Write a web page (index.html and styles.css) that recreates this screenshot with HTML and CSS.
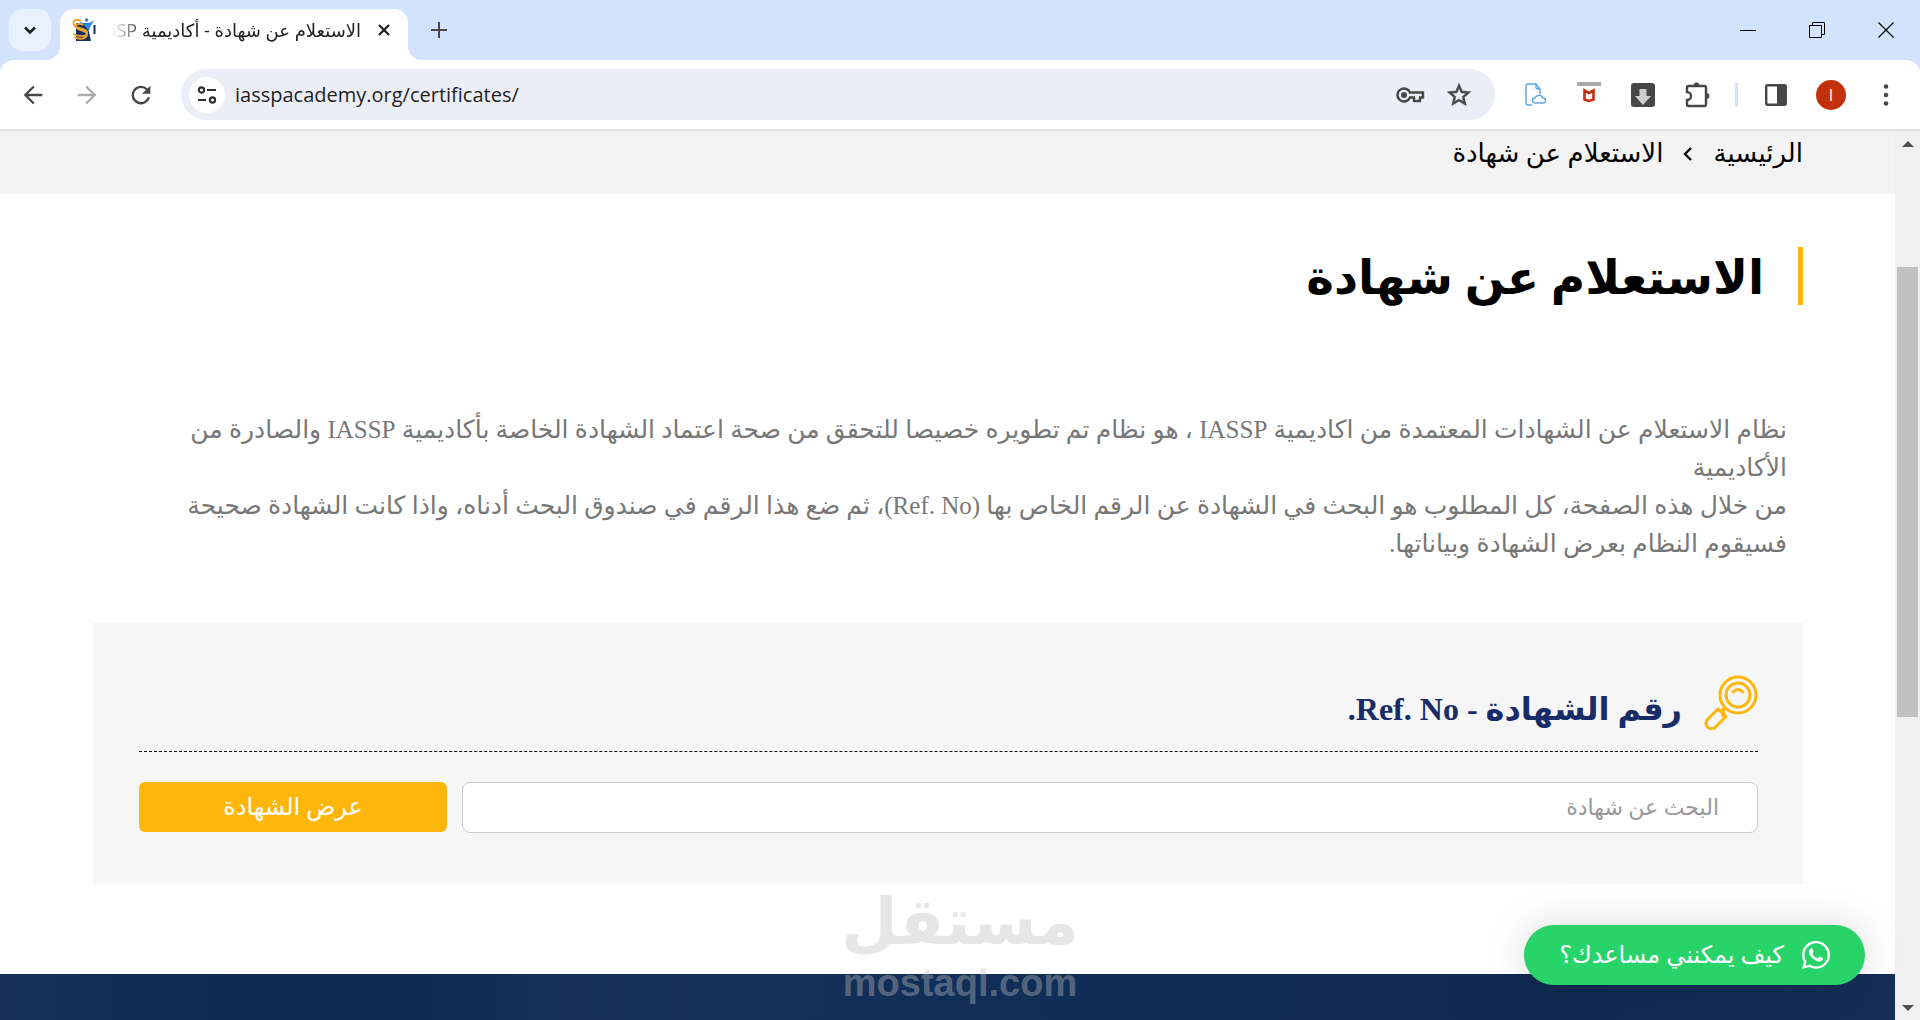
FILE: index.html
```html
<!DOCTYPE html>
<html lang="ar" dir="ltr">
<head>
  <meta charset="UTF-8">
  <meta name="viewport" content="width=device-width, initial-scale=1.0">
  <title>الاستعلام عن شهادة - أكاديمية IASSP</title>
  <link rel="stylesheet" href="styles.css">
</head>
<body>
  <div class="browser">
    <div class="tab-strip">
      <button class="tab-search" aria-label="Search tabs">
        <svg width="16" height="16" viewBox="0 0 16 16"><path d="M3 5.500 8 10.500l5-5" fill="none" stroke="#1f1f1f" stroke-width="2.600"/></svg>
      </button>
      <div class="tab">
        <svg class="favicon" width="24" height="24" viewBox="0 0 24 24">
          <path d="M4 5h11l4 18H4z" fill="#16305f"/>
          <circle cx="14.500" cy="2" r="1.800" fill="#2b8bd8"/>
          <path d="M8 4c5 2 9 2 14-2-2 5-5 7-5 12-3-5-4-7-9-8z" fill="#2b8bd8"/>
          <path d="M9 3C4 0 0 3 2 7c2 4 12 3 13 7 1 4-5 6-14 2M11 7C7 5 3 6 4 9c2 4 12 3 11 8-1 4-7 5-13 2" fill="none" stroke="#f2a32b" stroke-width="1.800"/>
          <path d="M22.500 7v9" stroke="#16305f" stroke-width="2"/>
        </svg>
        <span class="tab-title" dir="rtl">الاستعلام عن شهادة - أكاديمية IASSP</span>
        <button class="tab-close" aria-label="Close tab">
          <svg width="14" height="14" viewBox="0 0 14 14"><path d="M2 2l10 10M12 2 2 12" stroke="#1f1f1f" stroke-width="2.200"/></svg>
        </button>
      </div>
      <button class="new-tab" aria-label="New tab">
        <svg width="16" height="16" viewBox="0 0 16 16"><path d="M8 0v16M0 8h16" stroke="#474747" stroke-width="2"/></svg>
      </button>
      <div class="window-buttons">
        <button aria-label="Minimize"><svg width="16" height="16" viewBox="0 0 16 16"><path d="M0 8.500h16" stroke="#000"/></svg></button>
        <button aria-label="Restore"><svg width="16" height="16" viewBox="0 0 16 16"><path d="M.5 3.500h12v12H.5zM3.500 3.500v-3h12v12h-3" fill="none" stroke="#000"/></svg></button>
        <button aria-label="Close"><svg width="16" height="16" viewBox="0 0 16 16"><path d="M.5.5l15 15M15.500.5l-15 15" stroke="#000" stroke-width="1.200"/></svg></button>
      </div>
    </div>

    <div class="toolbar">
      <button aria-label="Back"><svg width="28" height="28" viewBox="0 0 24 24"><path d="M20 11H7.800l5.600-5.600L12 4l-8 8 8 8 1.400-1.400L7.800 13H20z" fill="#474747"/></svg></button>
      <button aria-label="Forward"><svg width="28" height="28" viewBox="0 0 24 24"><path d="M4 11h12.200l-5.600-5.600L12 4l8 8-8 8-1.400-1.400 5.600-5.600H4z" fill="#acacac"/></svg></button>
      <button aria-label="Reload"><svg width="28" height="28" viewBox="0 0 24 24"><path d="M17.650 6.350A8 8 0 1 0 19.730 14h-2.080A6 6 0 1 1 12 6c1.660 0 3.140.69 4.220 1.780L13 11h7V4z" fill="#474747"/></svg></button>
      <div class="omnibox">
        <button class="site-info" aria-label="Site information">
          <svg width="20" height="20" viewBox="0 0 20 20" fill="none" stroke="#303134" stroke-width="2.200"><circle cx="4.500" cy="5" r="2.600"/><path d="M10 5h9M1 15h8"/><circle cx="15.500" cy="15" r="2.600"/></svg>
        </button>
        <input class="url" type="text" value="iasspacademy.org/certificates/" aria-label="Address">
        <button aria-label="Passwords">
          <svg width="30" height="20" viewBox="0 0 30 20" fill="none" stroke="#474747" stroke-width="2.400"><path d="M15 7.500A6.500 6.500 0 1 0 15 12.500h4V16h6v-3.500h3v-5z"/><circle cx="9" cy="10" r="3" fill="#474747" stroke="none"/></svg>
        </button>
        <button class="bookmark" aria-label="Bookmark">
          <svg width="28" height="28" viewBox="0 0 24 24"><path d="M22 9.240l-7.190-.62L12 2 9.190 8.630 2 9.240l5.460 4.730L5.820 21 12 17.270 18.180 21l-1.630-7.030zM12 15.400l-3.760 2.270 1-4.280-3.320-2.880 4.380-.38L12 6.100l1.710 4.040 4.380.38-3.320 2.880 1 4.280z" fill="#474747" stroke="#474747" stroke-width=".5"/></svg>
        </button>
      </div>
      <div class="extensions">
        <button aria-label="Cloud document">
          <svg width="24" height="26" viewBox="0 0 24 26" fill="none" stroke="#5aa9e6" stroke-width="1.400"><path d="M9 23H5a2 2 0 0 1-2-2V4q0-2 2-2h8l4 5v5M13 2v3q0 2 2 2h2"/><path d="M12 21h8a2 2 0 0 0 0-5 4 4 0 0 0-6-2 3 3 0 0 0-2 2 2.500 2.500 0 0 0 0 5z"/></svg>
        </button>
        <button aria-label="Web protection">
          <svg width="24" height="26" viewBox="0 0 24 26"><path d="M0 0h24v4H0z" fill="#a9a9a9"/><path d="M7.500 8.500 12 11l4.500-2.500v9L12 19l-4.500-1.500z" fill="none" stroke="#c3300f" stroke-width="2.600"/></svg>
        </button>
        <button aria-label="Downloader">
          <svg width="24" height="26" viewBox="0 0 24 26"><rect y="1" width="24" height="24" rx="3" fill="#474747"/><path d="M8.500 7h7v7H20l-8 9-8-9h4.500z" fill="#cfcfcf"/></svg>
        </button>
        <button aria-label="Extensions">
          <svg width="26" height="26" viewBox="0 0 26 26"><path d="M3 5.500Q3 4 4.500 4h16Q22 4 22 5.500v17q0 1.500-1.500 1.500h-16Q3 24 3 22.500V18a4 4 0 0 0 0-8z" fill="none" stroke="#474747" stroke-width="2.400"/><path d="M9.500 4a3 3.500 0 0 1 6 0zM22 11a3.500 3 0 0 1 0 6z" fill="#474747"/></svg>
        </button>
        <span class="divider"></span>
        <button aria-label="Side panel">
          <svg width="24" height="24" viewBox="0 0 24 24"><rect x="2.200" y="2.200" width="19.600" height="19.600" rx="1.500" fill="none" stroke="#474747" stroke-width="2.400"/><path d="M13 2h9v20h-9z" fill="#474747"/></svg>
        </button>
        <button class="avatar" aria-label="Profile">I</button>
        <button aria-label="Menu">
          <svg width="24" height="24" viewBox="0 0 24 24" fill="#474747"><circle cx="12" cy="3.500" r="2.300"/><circle cx="12" cy="12" r="2.300"/><circle cx="12" cy="20.500" r="2.300"/></svg>
        </button>
      </div>
    </div>

    <div class="viewport">
      <div class="page" dir="rtl">
        <nav class="breadcrumb">
          <a href="#">الرئيسية</a>
          <svg width="10" height="16" viewBox="0 0 10 16"><path d="M8 2 2 8l6 6" fill="none" stroke="#000" stroke-width="2.400"/></svg>
          <span>الاستعلام عن شهادة</span>
        </nav>

        <main class="content">
          <h1>الاستعلام عن شهادة</h1>
          <div class="intro">
            <p>نظام الاستعلام عن الشهادات المعتمدة من اكاديمية IASSP ، هو نظام تم تطويره خصيصا للتحقق من صحة اعتماد الشهادة الخاصة بأكاديمية IASSP والصادرة من<br>الأكاديمية</p>
            <p>من خلال هذه الصفحة، كل المطلوب هو البحث في الشهادة عن الرقم الخاص بها (Ref. No)، ثم ضع هذا الرقم في صندوق البحث أدناه، واذا كانت الشهادة صحيحة<br>فسيقوم النظام بعرض الشهادة وبياناتها.</p>
          </div>

          <form class="search-panel">
            <div class="panel-title">
              <svg width="54" height="56" viewBox="0 0 54 56" fill="none" stroke="#ffb60a" stroke-width="3"><circle cx="34" cy="20" r="18"/><circle cx="34" cy="20" r="12"/><path d="M29 17q5-5 10 0" stroke-linecap="round"/><path d="M21.500 33 18 36.500M14 34l8 7.500L10.500 53q-4 2-7-1T3 45zM17.500 33.500l2.500 5-2 3" stroke-linejoin="round"/></svg>
              <label for="ref-no">رقم الشهادة - Ref. No.</label>
            </div>
            <div class="fields">
              <input type="text" id="ref-no" placeholder="البحث عن شهادة">
              <button type="submit">عرض الشهادة</button>
            </div>
          </form>
        </main>

        <footer class="page-footer"></footer>
      </div>

      <div class="scrollbar">
        <svg width="12" height="6" viewBox="0 0 12 6"><path d="M0 6h12L6 0z" fill="#505050"/></svg>
        <div class="track"><div class="thumb"></div></div>
        <svg width="12" height="6" viewBox="0 0 12 6"><path d="M0 0h12L6 6z" fill="#505050"/></svg>
      </div>

      <a class="whatsapp" href="#" dir="rtl">
        <svg width="28" height="28" viewBox="0 32 448 448"><path fill="#fff" d="M380.900 97.100C339 55.100 283.200 32 223.900 32c-122.400 0-222 99.600-222 222 0 39.100 10.200 77.300 29.600 111L0 480l117.700-30.900c32.400 17.700 68.900 27 106.100 27h.1c122.300 0 224.100-99.600 224.100-222 0-59.300-25.200-115-67.100-157zm-157 341.600c-33.200 0-65.700-8.900-94-25.700l-6.700-4-69.800 18.300L72 359.200l-4.400-7c-18.500-29.400-28.200-63.300-28.200-98.200 0-101.700 82.800-184.500 184.600-184.500 49.300 0 95.600 19.200 130.400 54.100 34.800 34.900 56.200 81.200 56.100 130.500 0 101.800-84.900 184.600-186.600 184.600zm101.200-138.200c-5.500-2.800-32.800-16.200-37.900-18-5.100-1.900-8.800-2.800-12.500 2.800-3.700 5.600-14.300 18-17.600 21.800-3.200 3.700-6.500 4.200-12 1.400-32.600-16.300-54-29.100-75.500-66-5.700-9.800 5.700-9.100 16.300-30.300 1.800-3.700.9-6.900-.5-9.700-1.400-2.800-12.500-30.100-17.100-41.200-4.500-10.800-9.100-9.300-12.500-9.500-3.200-.2-6.900-.2-10.600-.2-3.700 0-9.700 1.400-14.800 6.900-5.100 5.600-19.400 19-19.400 46.300 0 27.300 19.900 53.700 22.600 57.400 2.800 3.700 39.100 59.700 94.800 83.800 35.200 15.200 49 16.500 66.600 13.900 10.700-1.600 32.800-13.400 37.400-26.400 4.600-13 4.600-24.100 3.200-26.400-1.300-2.500-5-3.900-10.500-6.600z"/></svg>
        <span>كيف يمكنني مساعدك؟</span>
      </a>

      <div class="watermark">
        <span class="watermark-ar">مستقل</span>
        <span class="watermark-en">mostaql.com</span>
      </div>
    </div>
  </div>
</body>
</html>
```
FILE: styles.css
```css
* {
  box-sizing: border-box;
}
body {
  margin: 0;
  font-family: "Liberation Serif", "DejaVu Sans", sans-serif;
}
button {
  display: flex;
  align-items: center;
  justify-content: center;
  padding: 0;
  border: none;
  background: none;
  cursor: pointer;
}
.browser {
  display: flex;
  flex-direction: column;
  height: 100vh;
  overflow: hidden;
  background: #d3e3fd;
}

/* Tabs */
.tab-strip {
  display: flex;
  align-items: center;
  height: 60px;
  padding-left: 9px;
}
.tab-search {
  width: 42px;
  height: 42px;
  border-radius: 14px;
  background: #e9f1fe;
}
.tab {
  position: relative;
  display: flex;
  align-items: center;
  align-self: flex-end;
  gap: 16px;
  width: 348px;
  height: 51px;
  margin-left: 9px;
  padding: 0 17px 9px 12px;
  border-radius: 14px 14px 0 0;
  background: #fff;
}
.tab::before,
.tab::after {
  content: "";
  position: absolute;
  bottom: 0;
  width: 14px;
  height: 14px;
}
.tab::before {
  right: 100%;
  background: radial-gradient(circle at 0 0, transparent 14px, #fff 14px);
}
.tab::after {
  left: 100%;
  background: radial-gradient(circle at 100% 0, transparent 14px, #fff 14px);
}
.tab-title {
  flex: 1;
  overflow: hidden;
  white-space: nowrap;
  font-family: "Open Sans", "DejaVu Sans", sans-serif;
  font-size: 18px;
  color: #1f1f1f;
  -webkit-mask-image: linear-gradient(to right, transparent, #000 32px);
  mask-image: linear-gradient(to right, transparent, #000 32px);
}
.new-tab {
  margin-left: 23px;
}
.window-buttons {
  display: flex;
  margin-left: auto;
}
.window-buttons button {
  width: 69px;
  height: 60px;
}

/* Toolbar */
.toolbar {
  display: flex;
  align-items: center;
  gap: 26px;
  height: 71px;
  padding: 0 20px 0 19px;
  border-bottom: 2px solid #e1e1e1;
  border-radius: 14px 14px 0 0;
  background: #fff;
}
.omnibox {
  display: flex;
  flex: 1;
  align-items: center;
  gap: 10px;
  height: 51px;
  padding: 0 22px 0 8px;
  border-radius: 26px;
  background: #ebeef7;
}
.site-info {
  width: 36px;
  height: 36px;
  border-radius: 50%;
  background: #fff;
}
.url {
  flex: 1;
  padding: 0;
  border: none;
  outline: none;
  background: none;
  font-family: "Open Sans", sans-serif;
  font-size: 20px;
  color: #1f1f1f;
}
.bookmark {
  margin-left: 10px;
}
.extensions {
  display: flex;
  align-items: center;
  gap: 26px;
}
.extensions button {
  width: 28px;
}
.divider {
  width: 3px;
  height: 24px;
  margin: 0 -2px;
  background: #d3e3fd;
}
.extensions .avatar {
  width: 30px;
  height: 30px;
  border-radius: 50%;
  background: #c2310c;
  font-family: "Open Sans", sans-serif;
  font-size: 16px;
  color: #fff;
}

/* Page */
.viewport {
  position: relative;
  display: flex;
  flex: 1;
  min-height: 0;
  background: #fff;
}
.page {
  display: flex;
  flex: 1;
  flex-direction: column;
}
.breadcrumb {
  display: flex;
  align-items: center;
  gap: 20px;
  height: 63px;
  padding: 0 92px 18px;
  background: #f3f3f3;
  font-size: 26px;
  line-height: 45px;
  color: #000;
}
.breadcrumb a {
  color: #000;
  text-decoration: none;
}
.content {
  padding: 53px 92px 90px 93px;
}
h1 {
  margin: 0;
  padding: 4px 34px 0 0;
  border-right: 5px solid #ffb60a;
  font-size: 47px;
  line-height: 54px;
  color: #000;
}
.intro {
  margin: 106px 16px 60px;
  font-size: 25px;
  line-height: 38px;
  color: #777;
}
.intro p {
  margin: 0;
  white-space: nowrap;
}
.search-panel {
  padding: 52px 45px 51px 46px;
  background: #f6f6f6;
}
.panel-title {
  display: flex;
  align-items: center;
  gap: 22px;
  padding-bottom: 20px;
  border-bottom: 1px dashed #111;
  font-size: 32px;
  font-weight: bold;
  color: #182d68;
}
.panel-title label {
  padding-top: 12px;
}
.fields {
  display: flex;
  gap: 15px;
  margin-top: 30px;
}
.fields input {
  flex: 1;
  height: 51px;
  padding: 0 38px;
  border: 1px solid #ccc;
  border-radius: 8px;
  background: #fff;
  font-family: inherit;
  font-size: 22px;
}
.fields input::placeholder {
  color: #999;
}
.fields button {
  width: 308px;
  height: 50px;
  border-radius: 6px;
  background: #ffb60a;
  font-family: inherit;
  font-size: 24px;
  color: #fff;
}
.page-footer {
  flex: 1;
  background: linear-gradient(90deg, #15315a, #0d2a52 12%, #0d2a52 22%, #15315a 30%, #102d56 60%, #0f2a52 80%, #132f58);
}

/* Scrollbar */
.scrollbar {
  display: flex;
  flex-direction: column;
  align-items: center;
  width: 25px;
  padding: 10px 0 9px;
  background: #f0f0f0;
}
.track {
  display: flex;
  flex: 1;
  flex-direction: column;
  align-items: center;
  width: 100%;
  padding-top: 120px;
}
.thumb {
  width: 21px;
  height: 61%;
  background: #c1c1c1;
}

.whatsapp {
  position: absolute;
  right: 55px;
  bottom: 35px;
  display: flex;
  align-items: center;
  gap: 18px;
  height: 60px;
  padding: 0 35px;
  border-radius: 30px;
  background: #28d46a;
  box-shadow: 0 0 40px rgba(0, 0, 0, 0.15);
  font-size: 24px;
  color: #fff;
  text-decoration: none;
}
.watermark {
  position: absolute;
  right: 0;
  bottom: 18px;
  left: 0;
  display: flex;
  flex-direction: column;
  align-items: center;
  gap: 10px;
  font-weight: bold;
  color: #e6e6e6;
  pointer-events: none;
}
.watermark-ar {
  font-family: "DejaVu Sans", sans-serif;
  font-size: 65px;
  line-height: 65px;
}
.watermark-en {
  font-family: "Liberation Sans", sans-serif;
  font-size: 38px;
  line-height: 38px;
  color: rgba(190, 190, 190, 0.4);
}
```
